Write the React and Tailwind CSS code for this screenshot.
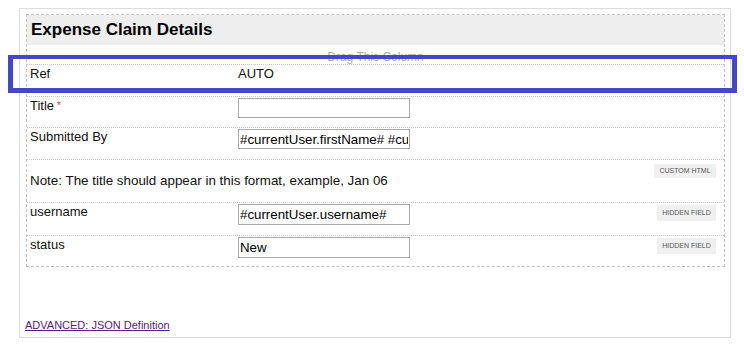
export default function App() {
  const rows = [
    { label: 'Ref', value: 'AUTO', kind: 'text', h: 'h-[32px]' },
    { label: 'Title', required: true, value: '', kind: 'input', h: 'h-[31px]' },
    { label: 'Submitted By', value: '#currentUser.firstName# #currentUser.lastName#', kind: 'input', h: 'h-[32px]' },
  ]
  const hidden = [
    { label: 'username', value: '#currentUser.username#', h: 'h-[33px]' },
    { label: 'status', value: 'New', h: 'h-[31px]' },
  ]

  return (
    <div className="relative w-[744px] h-[347px] bg-white pt-[8px] font-['Liberation_Sans',Arial,sans-serif] text-[#111]">
      <div className="ml-[19px] w-[712px] h-[330px] border border-[#dcdcdc] pl-[6px] pt-[5px] flex flex-col">
        <div className="w-[699px] border border-dashed border-[#c4c4c4]">
          <div className="h-[30px] bg-[#eeeeee] pl-[4px]">
            <h2 className="text-[17px] font-bold leading-[29px] text-black">Expense Claim Details</h2>
          </div>
          <div className="h-[19px] text-center text-[12px] leading-[24px] text-[#aaaaaa]">Drag This Column</div>

          {rows.map(r => (
            <div key={r.label} className={`${r.h} border-t border-dotted border-[#c8c8c8] flex pl-[3px]`}>
              <div className="w-[208px] text-[13px] leading-[15px] pt-[1px]">
                {r.label}
                {r.required && <span className="text-[#e0403a] text-[10px] ml-[3px] align-top">*</span>}
              </div>
              {r.kind === 'text' ? (
                <div className="text-[13px] leading-[15px] pt-[1px]">{r.value}</div>
              ) : (
                <input
                  readOnly
                  value={r.value}
                  className="mt-[1px] w-[172px] h-[20px] border border-[#a9a9a9] px-[1px] text-[13.3px] text-black outline-none font-['Liberation_Sans',Arial,sans-serif]"
                />
              )}
            </div>
          ))}

          <div className="h-[43px] border-t border-dotted border-[#c8c8c8] flex justify-between pl-[3px] pr-[8px]">
            <div className="pt-[13px] text-[13.4px] leading-[15px]">Note: The title should appear in this format, example, Jan 06</div>
            <span className="mt-[4px] h-[14px] w-[62px] bg-[#f0f0f0] text-[7px] leading-[14px] text-center text-[#555]">CUSTOM HTML</span>
          </div>

          {hidden.map(r => (
            <div key={r.label} className={`${r.h} border-t border-dotted border-[#c8c8c8] flex pl-[3px] pr-[8px]`}>
              <div className="w-[208px] text-[13px] leading-[15px] pt-[1px]">{r.label}</div>
              <input
                readOnly
                value={r.value}
                className="mt-[1px] w-[172px] h-[21px] border border-[#a9a9a9] px-[1px] text-[13.3px] text-black outline-none font-['Liberation_Sans',Arial,sans-serif]"
              />
              <span className="ml-auto mt-[2px] h-[16px] w-[59px] bg-[#f0f0f0] text-[7px] leading-[16px] text-center text-[#555]">HIDDEN FIELD</span>
            </div>
          ))}
        </div>

        <a href="#" className="mt-auto mb-[5px] -ml-[1px] text-[11px] leading-[13px] text-[#551a8b] underline self-start">ADVANCED: JSON Definition</a>
      </div>

      <div className="absolute left-[8px] top-[55px] w-[729px] h-[38px] border-[5px] border-t-4 border-[#4347c8]" />
    </div>
  )
}
